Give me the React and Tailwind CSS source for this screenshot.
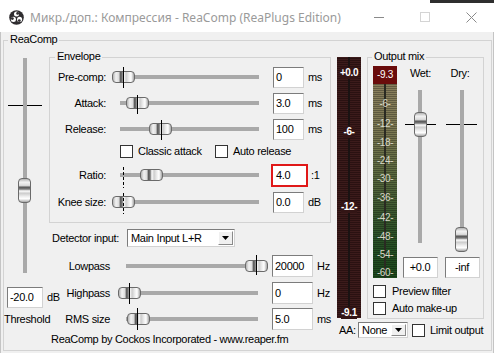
import React from "react";

const thumbH =
  "bg-[linear-gradient(to_right,#b4b4b4_0%,#f2f2f2_14%,#dcdcdc_28%,#5a5a5a_36%,#7a7a7a_44%,#fdfdfd_52%,#cdcdcd_62%,#eeeeee_76%,#ffffff_86%,#a6a6a6_100%)]";
const thumbV =
  "bg-[linear-gradient(to_bottom,#b4b4b4_0%,#f2f2f2_14%,#dcdcdc_28%,#5a5a5a_36%,#7a7a7a_44%,#fdfdfd_52%,#cdcdcd_62%,#eeeeee_76%,#ffffff_86%,#a6a6a6_100%)]";
const dashed =
  "bg-[repeating-linear-gradient(to_bottom,#000_0px,#000_3px,transparent_3px,transparent_5px)]";

function VBox({ className = "", children }) {
  return (
    <div
      className={`shrink-0 flex items-center bg-white border border-t-[#7c7c7c] border-l-[#7c7c7c] border-r-[#d2d2d2] border-b-[#d2d2d2] ${className}`}
    >
      {children}
    </div>
  );
}

function Check({ className = "" }) {
  return <div className={`shrink-0 w-[13px] h-[13px] bg-white border border-[#333333] ${className}`} />;
}

function Select({ className = "", text }) {
  return (
    <div
      className={`shrink-0 flex bg-white border border-t-[#7c7c7c] border-l-[#7c7c7c] border-r-[#d2d2d2] border-b-[#d2d2d2] ${className}`}
    >
      <div className="flex-1 flex items-center pl-[3px] whitespace-nowrap overflow-hidden">{text}</div>
      <div className="w-[15px] my-[1px] mr-[1px] bg-[#f0f0f0] border border-t-white border-l-white border-r-[#8a8a8a] border-b-[#8a8a8a] flex items-center justify-center">
        <svg width="7" height="4" viewBox="0 0 7 4">
          <path d="M0 0h7L3.5 4z" fill="#000" />
        </svg>
      </div>
    </div>
  );
}

function GroupBox({ label, className = "", labelCls = "", children }) {
  return (
    <div className={`relative shrink-0 border border-[#d3d3d3] ${className}`}>
      <span className={`absolute top-[-8px] px-[2px] bg-[#f0f0f0] whitespace-nowrap ${labelCls}`}>{label}</span>
      {children}
    </div>
  );
}

function HSlider({ w, trackCls, thumbCls, tickCls }) {
  return (
    <div className={`relative h-full shrink-0 flex items-center ${w}`}>
      <div className={`h-[4px] bg-[#a9a9a9] ${trackCls}`} />
      <div className={`absolute w-[23px] h-[12px] rounded-[4px] border border-[#6a6a6a] ${thumbH} ${thumbCls}`} />
      <div className={`absolute w-[1px] ${tickCls}`} />
    </div>
  );
}

function EnvRow({ label, thumbCls, tickCls, value, unit, className = "", boxCls = "" }) {
  return (
    <div className={`flex items-center ${className}`}>
      <div className="w-[56px] shrink-0 text-right whitespace-nowrap">{label}</div>
      <HSlider w="w-[160px]" trackCls="ml-[14px] w-[139px]" thumbCls={thumbCls} tickCls={tickCls} />
      {boxCls ? (
        <div className={`shrink-0 flex items-center bg-white border-2 border-[#e01818] ${boxCls}`}>
          <span className="pl-[3px]">{value}</span>
        </div>
      ) : (
        <VBox className="ml-[7px] w-[31px] h-[21px] pl-[2px]">{value}</VBox>
      )}
      <span className={`${boxCls ? "ml-[3px]" : "ml-[4px]"} whitespace-nowrap`}>{unit}</span>
    </div>
  );
}

function FiltRow({ label, thumbCls, tickCls, value, unit, className = "" }) {
  return (
    <div className={`flex items-center h-[22px] ${className}`}>
      <div className="w-[61px] shrink-0 text-right whitespace-nowrap">{label}</div>
      <HSlider w="w-[162px]" trackCls="ml-[16px] w-[132px]" thumbCls={thumbCls} tickCls={tickCls} />
      <VBox className="w-[41px] h-[22px] pl-[2px]">{value}</VBox>
      <span className="ml-[4px] whitespace-nowrap">{unit}</span>
    </div>
  );
}

const outLabels = [
  { t: "-6-", c: "top-[14px]" },
  { t: "-12-", c: "top-[34px]" },
  { t: "-18-", c: "top-[53px]" },
  { t: "-24-", c: "top-[71px]" },
  { t: "-30-", c: "top-[89px]" },
  { t: "-36-", c: "top-[108px]" },
  { t: "-42-", c: "top-[128px]" },
  { t: "-48-", c: "top-[147px]" },
  { t: "-54-", c: "top-[165px]" },
  { t: "-60-", c: "top-[183px]" },
];

const inLabels = [
  { t: "+0.0", c: "top-[10px]" },
  { t: "-6-", c: "top-[69px]" },
  { t: "-12-", c: "top-[144px]" },
  { t: "-9.1", c: "top-[250px]" },
];

function InputMeter() {
  return (
    <div className="relative shrink-0 w-[24px] h-[261px] bg-[repeating-linear-gradient(to_bottom,#3c1b1b_0px,#3c1b1b_1px,#2a1111_1px,#2a1111_2px)]">
      <div className="absolute left-[11px] top-0 bottom-0 w-[2px] bg-[#1a1212]" />
      {inLabels.map((l) => (
        <div key={l.t} className={`absolute inset-x-0 flex justify-center ${l.c}`}>
          <span className="bg-[#331515] text-white text-[10px] leading-[12px] font-bold tracking-[-0.4px]">{l.t}</span>
        </div>
      ))}
    </div>
  );
}

function OutputMeter() {
  return (
    <div className="shrink-0 w-[24px] h-[212px] flex flex-col">
      <div className="h-[18px] bg-[#6a0c0c] flex items-center justify-center text-white text-[10px] leading-[12px] tracking-[-0.3px]">
        -9.3
      </div>
      <div className="relative flex-1 bg-[image:repeating-linear-gradient(to_bottom,rgba(0,0,0,0.28)_0px,rgba(0,0,0,0.28)_1px,transparent_1px,transparent_2px),linear-gradient(to_bottom,#8a7f5d_0%,#7b7852_25%,#5f6c42_45%,#3f5b32_65%,#255024_85%,#1d4a1d_100%)]">
        <div className="absolute left-[11px] top-0 bottom-0 w-[2px] bg-[#2a2a22]" />
        {outLabels.map((l) => (
          <div key={l.t} className={`absolute inset-x-0 flex justify-center ${l.c}`}>
            <span className="text-[#d8d8c8] text-[10px] leading-[12px] tracking-[-0.4px]">{l.t}</span>
          </div>
        ))}
      </div>
    </div>
  );
}

function TitleBar() {
  return (
    <div className="h-[32px] flex flex-col bg-white">
      <div className="h-[3px] flex justify-end">
        <div className="w-[64px] h-[3px] bg-[#2e2e2e]" />
      </div>
      <div className="h-[29px] flex items-center pb-[1px]">
        <svg className="ml-[9px] shrink-0" width="15" height="15" viewBox="0 0 16 16">
          <circle cx="8" cy="8" r="7.8" fill="#2f2d30" />
          <circle cx="8" cy="4.2" r="2.7" fill="#fff" />
          <circle cx="4.7" cy="10" r="2.7" fill="#fff" />
          <circle cx="11.3" cy="10" r="2.7" fill="#fff" />
          <circle cx="9.2" cy="3.6" r="1.5" fill="#2f2d30" />
          <circle cx="3.6" cy="9.1" r="1.5" fill="#2f2d30" />
          <circle cx="11" cy="11.3" r="1.5" fill="#2f2d30" />
        </svg>
        <span className="ml-[6px] text-[12px] tracking-normal text-[#9a9a9a] whitespace-nowrap font-['Noto_Sans','Liberation_Sans',sans-serif]">
          Микр./доп.: Компрессия - ReaComp (ReaPlugs Edition)
        </span>
        <div className="ml-auto flex h-full">
          <div className="w-[46px] flex items-center justify-center">
            <svg width="10" height="10" viewBox="0 0 10 10">
              <path d="M0 5.5h10" stroke="#8a8a8a" strokeWidth="1" />
            </svg>
          </div>
          <div className="w-[46px] flex items-center justify-center">
            <svg width="10" height="10" viewBox="0 0 10 10">
              <rect x="0.5" y="0.5" width="9" height="9" fill="none" stroke="#d4d4d4" strokeWidth="1" />
            </svg>
          </div>
          <div className="w-[46px] flex items-center justify-center">
            <svg width="11" height="11" viewBox="0 0 11 11">
              <path d="M0.5 0.5L10.5 10.5M10.5 0.5L0.5 10.5" stroke="#8a8a8a" strokeWidth="1" />
            </svg>
          </div>
        </div>
      </div>
    </div>
  );
}

export default function App() {
  return (
    <div className="w-[494px] h-[353px] overflow-hidden bg-white text-black text-[11px] leading-[13px] tracking-[-0.3px] font-['Liberation_Sans',Arial,sans-serif]">
      <TitleBar />
      <div className="h-[321px] bg-[#f0f0f0] pt-[8px] pl-[2px] border-x border-[#c4c4c4]">
        <GroupBox label="ReaComp" className="w-[489px] h-[311px] flex" labelCls="left-[4px]">
          {/* Threshold column */}
          <div className="w-[45px] shrink-0 flex flex-col">
            <div className="relative mt-[17px] h-[215px]">
              <div className="absolute top-[47px] left-[4px] w-[34px] h-[1px] bg-black" />
              <div className="relative ml-[19px] w-[4px] h-[215px] bg-[#a9a9a9]" />
              <div className={`absolute top-[120px] left-[14px] w-[13px] h-[25px] rounded-[4px] border border-[#6a6a6a] ${thumbV}`} />
            </div>
            <div className="mt-[14px] flex items-center h-[21px]">
              <VBox className="ml-[3px] w-[36px] h-[21px] pl-[2px]">-20.0</VBox>
              <span className="ml-[4px] shrink-0 whitespace-nowrap">dB</span>
            </div>
            <div className="mt-[5px] whitespace-nowrap">Threshold</div>
          </div>

          {/* Middle column */}
          <div className="w-[282px] shrink-0 flex flex-col">
            <GroupBox label="Envelope" className="mt-[16px] w-[282px] h-[166px]" labelCls="left-[5px]">
              <div className="flex flex-col pt-[8px]">
                <EnvRow
                  className="h-[22px]"
                  label="Pre-comp:"
                  thumbCls="left-[6px] top-[5px]"
                  tickCls="left-[17px] top-[1px] h-[21px] bg-black"
                  value="0"
                  unit="ms"
                />
                <EnvRow
                  className="h-[22px] mt-[4px]"
                  label="Attack:"
                  thumbCls="left-[20px] top-[5px]"
                  tickCls="left-[31px] top-[3px] h-[19px] bg-black"
                  value="3.0"
                  unit="ms"
                />
                <EnvRow
                  className="h-[22px] mt-[4px]"
                  label="Release:"
                  thumbCls="left-[43px] top-[5px]"
                  tickCls="left-[55px] top-[2px] h-[20px] bg-black"
                  value="100"
                  unit="ms"
                />
                <div className="h-[14px] mt-[4px] flex items-center">
                  <div className="w-[95px] ml-[70px] shrink-0 flex items-center">
                    <Check />
                    <span className="ml-[5px] whitespace-nowrap">Classic attack</span>
                  </div>
                  <Check />
                  <span className="ml-[5px] whitespace-nowrap">Auto release</span>
                </div>
                <EnvRow
                  className="h-[24px] mt-[5px]"
                  label="Ratio:"
                  thumbCls="left-[34px] top-[6px]"
                  tickCls={`left-[17px] top-[4px] h-[21px] ${dashed}`}
                  value="4.0"
                  unit=":1"
                  boxCls="ml-[5px] w-[37px] h-[23px]"
                />
                <EnvRow
                  className="h-[22px] mt-[4px]"
                  label="Knee size:"
                  thumbCls="left-[6px] top-[5px]"
                  tickCls={`left-[17px] top-[2px] h-[21px] ${dashed}`}
                  value="0.0"
                  unit="dB"
                />
              </div>
            </GroupBox>

            <div className="mt-[6px] h-[18px] flex items-center">
              <div className="w-[75px] shrink-0 pl-[3px] whitespace-nowrap">Detector input:</div>
              <Select className="ml-[3px] w-[108px] h-[18px]" text="Main Input L+R" />
            </div>

            <FiltRow
              className="mt-[8px]"
              label="Lowpass"
              thumbCls="left-[135px] top-[5px]"
              tickCls="left-[146px] top-0 h-[20px] bg-black"
              value="20000"
              unit="Hz"
            />
            <FiltRow
              className="mt-[5px]"
              label="Highpass"
              thumbCls="left-[8px] top-[5px]"
              tickCls="left-[19px] top-[1px] h-[21px] bg-black"
              value="0"
              unit="Hz"
            />
            <FiltRow
              className="mt-[4px]"
              label="RMS size"
              thumbCls="left-[17px] top-[5px]"
              tickCls="left-[27px] top-0 h-[22px] bg-black"
              value="5.0"
              unit="ms"
            />
            <div className="mt-[3px] pl-[2px] whitespace-nowrap">ReaComp by Cockos Incorporated - www.reaper.fm</div>
          </div>

          {/* Right area */}
          <div className="ml-[6px] w-[147px] shrink-0 flex flex-col">
            <div className="flex mt-[16px]">
              <InputMeter />
              <GroupBox label="Output mix" className="ml-[6px] w-[117px] h-[262px]" labelCls="left-[4px]">
                <div className="flex mt-[8px] ml-[5px]">
                  <OutputMeter />
                  <div className="ml-[4px] flex">
                    <div className="w-[38px] shrink-0 flex flex-col items-center">
                      <div className="h-[14px] leading-[14px] pl-[1px]">Wet:</div>
                      <div className="relative w-full h-[175px]">
                        <div className="absolute top-[44px] left-[4px] w-[31px] h-[1px] bg-black" />
                        <div className="relative mx-auto mt-[10px] w-[4px] h-[153px] bg-[#a9a9a9]" />
                        <div className={`absolute top-[32px] left-[13px] w-[13px] h-[25px] rounded-[4px] border border-[#6a6a6a] ${thumbV}`} />
                      </div>
                      <VBox className="mt-[2px] w-[35px] h-[21px] justify-center">+0.0</VBox>
                    </div>
                    <div className="ml-[4px] w-[38px] shrink-0 flex flex-col items-center">
                      <div className="h-[14px] leading-[14px] pr-[4px]">Dry:</div>
                      <div className="relative w-full h-[175px]">
                        <div className="absolute top-[44px] left-[3px] w-[31px] h-[1px] bg-black" />
                        <div className="relative mx-auto mt-[10px] w-[4px] h-[150px] bg-[#a9a9a9]" />
                        <div className={`absolute top-[147px] left-[12px] w-[13px] h-[25px] rounded-[4px] border border-[#6a6a6a] ${thumbV}`} />
                      </div>
                      <VBox className="mt-[2px] w-[35px] h-[21px] justify-center">-inf</VBox>
                    </div>
                  </div>
                </div>
                <div className="ml-[5px] mt-[7px] h-[13px] flex items-center">
                  <Check />
                  <span className="ml-[6px] whitespace-nowrap">Preview filter</span>
                </div>
                <div className="ml-[5px] mt-[4px] h-[13px] flex items-center">
                  <Check />
                  <span className="ml-[6px] whitespace-nowrap">Auto make-up</span>
                </div>
              </GroupBox>
            </div>
            <div className="mt-[3px] h-[16px] flex items-center">
              <div className="w-[21px] shrink-0 pl-[2px]">AA:</div>
              <Select className="w-[50px] h-[16px]" text="None" />
              <Check className="ml-[4px]" />
              <span className="ml-[5px] whitespace-nowrap">Limit output</span>
            </div>
          </div>
        </GroupBox>
      </div>
    </div>
  );
}
